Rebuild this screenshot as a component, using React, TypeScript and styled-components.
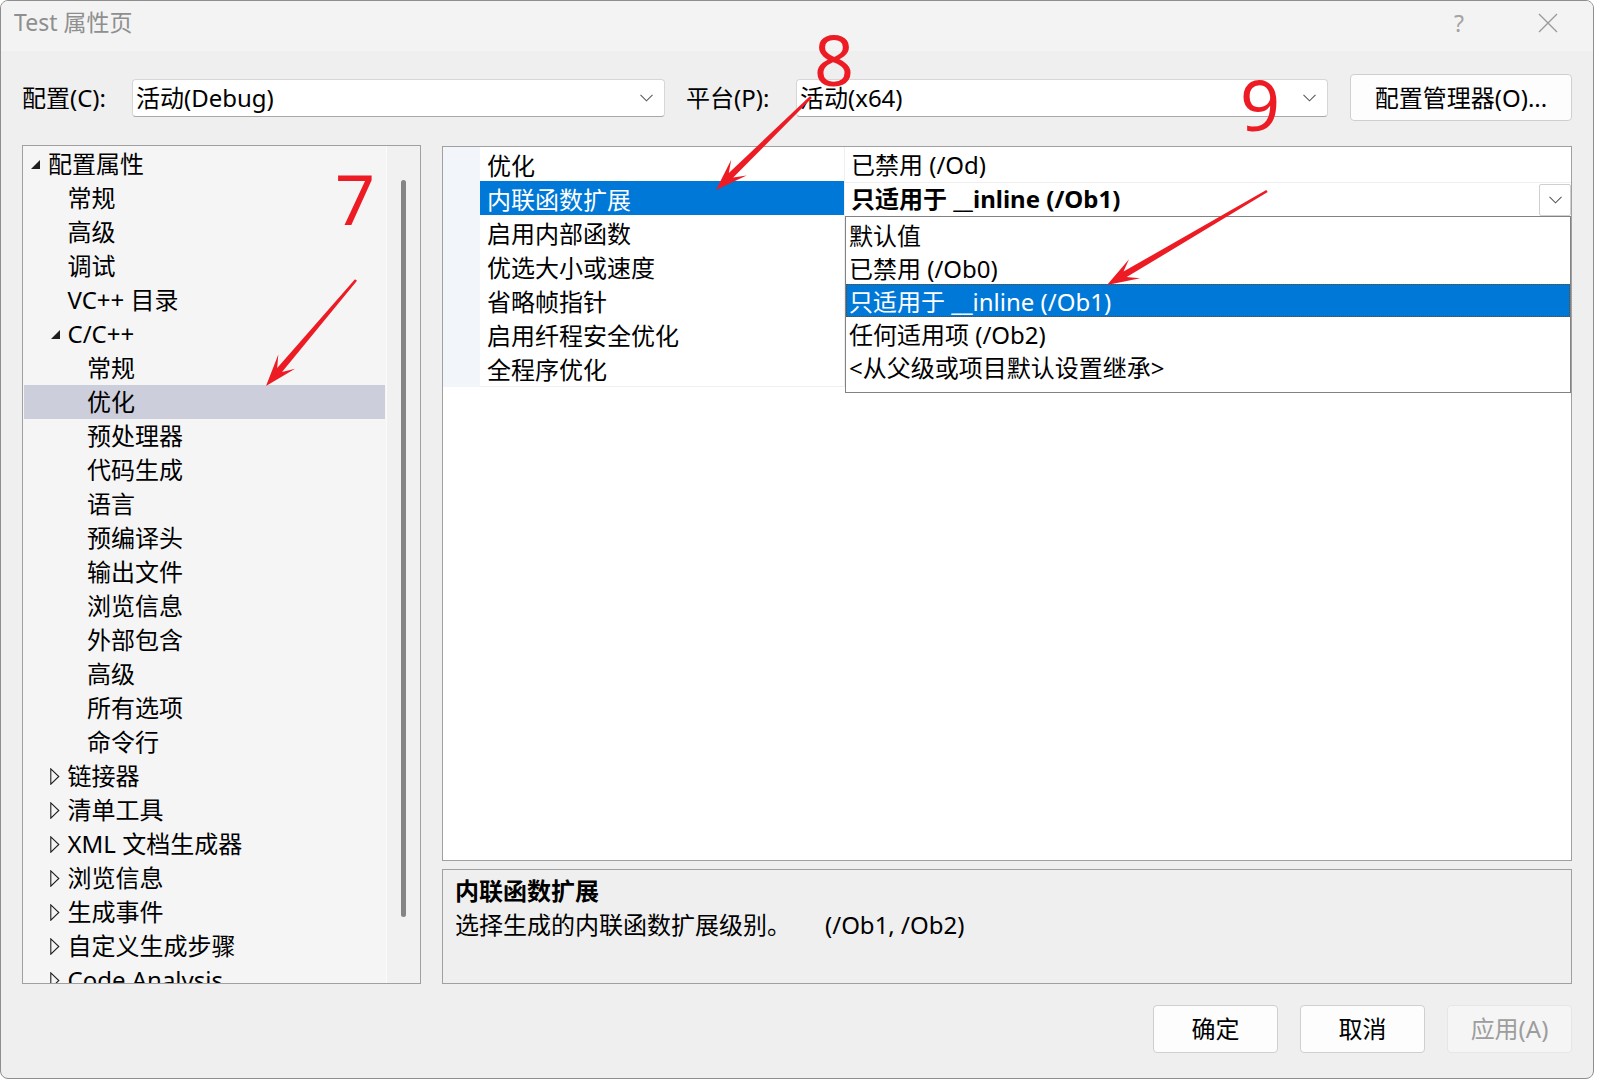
import React from 'react';
import styled, { createGlobalStyle } from 'styled-components';

const FONT = `"Noto Sans", "Noto Sans CJK SC", sans-serif`;

const Global = createGlobalStyle`
  html, body { margin: 0; padding: 0; background: #ffffff; }
  body { font-family: ${FONT}; }
  * { box-sizing: border-box; }
`;

const Window = styled.div`
  position: relative;
  width: 1594px;
  height: 1079px;
  border: 1px solid #8e8e8e;
  border-radius: 8px;
  overflow: hidden;
  background: #efefef;
  display: flex;
  flex-direction: column;
  font-family: ${FONT};
  font-size: 24px;
  color: #000;
`;

const TitleBar = styled.div`
  height: 50px;
  flex: none;
  background: #f3f3f3;
  display: flex;
  align-items: flex-start;
  padding: 4px 0 0 13px;
`;

const Title = styled.div`
  line-height: 34px;
  color: #8f8f8f;
  font-size: 23px;
`;

const Controls = styled.div`
  margin-left: auto;
  display: flex;
  align-items: center;
  height: 36px;
`;

const HelpBtn = styled.div`
  width: 46px;
  margin-right: 21px;
  text-align: center;
  color: #a3a3a3;
  font-size: 23px;
  line-height: 34px;
`;

const CloseBtn = styled.div`
  width: 90px;
  display: flex;
  align-items: center;
  justify-content: center;
`;

const Body = styled.div`
  flex: 1;
  display: flex;
  flex-direction: column;
  padding: 0 21px;
`;

const ConfigRow = styled.div`
  margin-top: 23px;
  height: 47px;
  display: flex;
  align-items: center;
`;

const Label = styled.div<{ $gap?: number }>`
  width: 110px;
  margin-left: ${(p) => p.$gap ?? 0}px;
  flex: none;
  line-height: 34px;
`;

const Combo = styled.div<{ $w: number }>`
  width: ${(p) => p.$w}px;
  height: 38px;
  flex: none;
  background: #ffffff;
  border: 1px solid #d6d6d6;
  border-bottom-color: #a8a8a8;
  border-radius: 4px;
  display: flex;
  align-items: center;
  padding: 0 11px 0 3px;
`;

const ComboText = styled.div`
  flex: 1;
  line-height: 34px;
  white-space: nowrap;
`;

const PushButton = styled.div<{ $w: number; $disabled?: boolean }>`
  width: ${(p) => p.$w}px;
  height: 48px;
  flex: none;
  display: flex;
  align-items: center;
  justify-content: center;
  background: ${(p) => (p.$disabled ? '#f5f5f5' : '#fdfdfd')};
  border: 1px solid ${(p) => (p.$disabled ? '#e6e6e6' : '#cfcfcf')};
  border-radius: 4px;
  color: ${(p) => (p.$disabled ? '#9d9d9d' : '#000')};
  line-height: 34px;
  white-space: nowrap;
`;

const ManagerButton = styled(PushButton)`
  margin-left: 22px;
  height: 47px;
`;

const Main = styled.div`
  margin-top: 24px;
  height: 839px;
  display: grid;
  grid-template-columns: 399px 1fr;
  column-gap: 21px;
`;

const TreePanel = styled.div`
  border: 1px solid #a0a0a0;
  background: #f5f5f5;
  display: flex;
  overflow: hidden;
`;

const TreeList = styled.div`
  flex: 1;
  padding-top: 1px;
  overflow: hidden;
`;

const TreeRow = styled.div<{ $depth: number; $selected?: boolean }>`
  height: 34px;
  margin: 0 1px;
  display: flex;
  align-items: center;
  padding-left: ${(p) => 6 + p.$depth * 19.5}px;
  background: ${(p) => (p.$selected ? '#cccedb' : 'transparent')};
  white-space: nowrap;
`;

const Toggle = styled.div`
  width: 18px;
  flex: none;
  display: flex;
  align-items: center;
`;

const RowText = styled.span`
  line-height: 34px;
`;

const ScrollTrack = styled.div`
  width: 34px;
  flex: none;
  border-left: 1px solid #fbfbfb;
  background: #f1f1f1;
  padding: 34px 0 0 14px;
`;

const ScrollThumb = styled.div`
  width: 5px;
  height: 737px;
  border-radius: 3px;
  background: #858585;
`;

const RightCol = styled.div`
  display: flex;
  flex-direction: column;
  gap: 8px;
`;

const GridPanel = styled.div`
  margin-top: 1px;
  height: 715px;
  border: 1px solid #a0a0a0;
  background: #ffffff;
`;

const GridRow = styled.div`
  display: grid;
  grid-template-columns: 37px 365px 1fr;
  height: 34px;
`;

const MarginCell = styled.div`
  background: #f2f5fa;
`;

const NameCell = styled.div<{ $selected?: boolean }>`
  display: flex;
  align-items: center;
  padding-left: 7px;
  border-bottom: 1px solid #efefef;
  border-right: 1px solid #efefef;
  background: ${(p) => (p.$selected ? '#0078d7' : '#ffffff')};
  color: ${(p) => (p.$selected ? '#ffffff' : '#000')};
  white-space: nowrap;
`;

const ValueCell = styled.div<{ $bold?: boolean }>`
  position: relative;
  display: flex;
  align-items: center;
  padding-left: 6px;
  border-bottom: 1px solid #efefef;
  font-weight: ${(p) => (p.$bold ? 700 : 400)};
  white-space: nowrap;
`;

const ValueText = styled.span`
  flex: 1;
  line-height: 33px;
`;

const DropButton = styled.div`
  width: 32px;
  height: 32px;
  flex: none;
  align-self: flex-end;
  background: #ffffff;
  border: 1px solid #cfcfcf;
  border-radius: 2px;
  display: flex;
  align-items: center;
  justify-content: center;
`;

const DropList = styled.div`
  position: absolute;
  top: 100%;
  left: 0;
  right: 0;
  z-index: 5;
  background: #ffffff;
  border: 1px solid #828282;
  padding: 1px 0 9px;
  font-weight: 400;
`;

const DropItem = styled.div<{ $selected?: boolean }>`
  height: 33px;
  display: flex;
  align-items: center;
  padding-left: 3px;
  background: ${(p) => (p.$selected ? '#0078d7' : 'transparent')};
  color: ${(p) => (p.$selected ? '#ffffff' : '#000')};
  outline: ${(p) => (p.$selected ? '1px dotted #6b4a1c' : 'none')};
  outline-offset: -1px;
`;

const DescPanel = styled.div`
  height: 115px;
  border: 1px solid #a0a0a0;
  background: #efefef;
  padding: 4px 12px;
`;

const DescTitle = styled.div`
  font-weight: 700;
  line-height: 34px;
`;

const DescText = styled.div`
  line-height: 34px;
  white-space: nowrap;
`;

const DescFlags = styled.span`
  margin-left: 34px;
`;

const Footer = styled.div`
  margin-top: 21px;
  display: flex;
  justify-content: flex-end;
  gap: 22px;
`;

const Overlay = styled.svg`
  position: absolute;
  left: -1px;
  top: -1px;
  pointer-events: none;
  z-index: 10;
`;

const Digit = styled.span<{ $x: number; $y: number }>`
  position: absolute;
  left: ${(p) => p.$x}px;
  top: ${(p) => p.$y}px;
  z-index: 11;
  font-family: "Noto Sans", sans-serif;
  font-size: 70px;
  line-height: 1;
  color: #ed1c24;
`;

const Chevron = () => (
  <svg width="13" height="8" viewBox="0 0 13 8">
    <polyline points="0.5,0.8 6.5,6.8 12.5,0.8" fill="none" stroke="#5a5a5a" strokeWidth="1.1" />
  </svg>
);

const Expanded = () => (
  <svg width="11" height="11" viewBox="0 0 11 11">
    <polygon points="10,1 10,10 1,10" fill="#1e1e1e" />
  </svg>
);

const Collapsed = () => (
  <svg width="10" height="17" viewBox="0 0 10 17">
    <polygon points="0.8,0.8 8.8,8.5 0.8,16.2" fill="none" stroke="#1e1e1e" strokeWidth="1.1" />
  </svg>
);

const CloseIcon = () => (
  <svg width="20" height="20" viewBox="0 0 20 20">
    <path d="M1 1 L19 19 M19 1 L1 19" stroke="#9a9a9a" strokeWidth="1.3" fill="none" />
  </svg>
);

function arrowPoints(sx: number, sy: number, tx: number, ty: number) {
  const dx = tx - sx;
  const dy = ty - sy;
  const len = Math.hypot(dx, dy);
  const ux = dx / len;
  const uy = dy / len;
  const nx = -uy;
  const ny = ux;
  const L = 30;
  const W = 11;
  const neck = 3.2;
  const tail = 1.3;
  const p = (a: number, b: number) =>
    `${(tx - ux * a + nx * b).toFixed(1)},${(ty - uy * a + ny * b).toFixed(1)}`;
  return [
    `${(sx + nx * tail).toFixed(1)},${(sy + ny * tail).toFixed(1)}`,
    p(L - 9, neck),
    p(L + 2, W),
    `${tx},${ty}`,
    p(L + 2, -W),
    p(L - 9, -neck),
    `${(sx - nx * tail).toFixed(1)},${(sy - ny * tail).toFixed(1)}`,
  ].join(' ');
}

type TreeItem = { label: string; depth: number; toggle?: 'open' | 'closed'; selected?: boolean };

const tree: TreeItem[] = [
  { label: '配置属性', depth: 0, toggle: 'open' },
  { label: '常规', depth: 1 },
  { label: '高级', depth: 1 },
  { label: '调试', depth: 1 },
  { label: 'VC++ 目录', depth: 1 },
  { label: 'C/C++', depth: 1, toggle: 'open' },
  { label: '常规', depth: 2 },
  { label: '优化', depth: 2, selected: true },
  { label: '预处理器', depth: 2 },
  { label: '代码生成', depth: 2 },
  { label: '语言', depth: 2 },
  { label: '预编译头', depth: 2 },
  { label: '输出文件', depth: 2 },
  { label: '浏览信息', depth: 2 },
  { label: '外部包含', depth: 2 },
  { label: '高级', depth: 2 },
  { label: '所有选项', depth: 2 },
  { label: '命令行', depth: 2 },
  { label: '链接器', depth: 1, toggle: 'closed' },
  { label: '清单工具', depth: 1, toggle: 'closed' },
  { label: 'XML 文档生成器', depth: 1, toggle: 'closed' },
  { label: '浏览信息', depth: 1, toggle: 'closed' },
  { label: '生成事件', depth: 1, toggle: 'closed' },
  { label: '自定义生成步骤', depth: 1, toggle: 'closed' },
  { label: 'Code Analysis', depth: 1, toggle: 'closed' },
];

const props: { name: string; value: string }[] = [
  { name: '优化', value: '已禁用 (/Od)' },
  { name: '内联函数扩展', value: '只适用于 __inline (/Ob1)' },
  { name: '启用内部函数', value: '' },
  { name: '优选大小或速度', value: '' },
  { name: '省略帧指针', value: '' },
  { name: '启用纤程安全优化', value: '' },
  { name: '全程序优化', value: '' },
];

const options = ['默认值', '已禁用 (/Ob0)', '只适用于 __inline (/Ob1)', '任何适用项 (/Ob2)', '<从父级或项目默认设置继承>'];

export default function App() {
  return (
    <>
      <Global />
      <Window>
        <TitleBar>
          <Title>Test 属性页</Title>
          <Controls>
            <HelpBtn>?</HelpBtn>
            <CloseBtn>
              <CloseIcon />
            </CloseBtn>
          </Controls>
        </TitleBar>
        <Body>
          <ConfigRow>
            <Label>配置(C):</Label>
            <Combo $w={533}>
              <ComboText>活动(Debug)</ComboText>
              <Chevron />
            </Combo>
            <Label $gap={21}>平台(P):</Label>
            <Combo $w={532}>
              <ComboText>活动(x64)</ComboText>
              <Chevron />
            </Combo>
            <ManagerButton $w={222}>配置管理器(O)...</ManagerButton>
          </ConfigRow>
          <Main>
            <TreePanel>
              <TreeList>
                {tree.map((t, i) => (
                  <TreeRow key={i} $depth={t.depth} $selected={t.selected}>
                    <Toggle>
                      {t.toggle === 'open' && <Expanded />}
                      {t.toggle === 'closed' && <Collapsed />}
                    </Toggle>
                    <RowText>{t.label}</RowText>
                  </TreeRow>
                ))}
              </TreeList>
              <ScrollTrack>
                <ScrollThumb />
              </ScrollTrack>
            </TreePanel>
            <RightCol>
              <GridPanel>
                {props.map((p, i) => (
                  <GridRow key={i}>
                    <MarginCell />
                    <NameCell $selected={i === 1}>{p.name}</NameCell>
                    <ValueCell $bold={i === 1}>
                      <ValueText>{p.value}</ValueText>
                      {i === 1 && (
                        <>
                          <DropButton>
                            <Chevron />
                          </DropButton>
                          <DropList>
                            {options.map((o, j) => (
                              <DropItem key={j} $selected={j === 2}>
                                {o}
                              </DropItem>
                            ))}
                          </DropList>
                        </>
                      )}
                    </ValueCell>
                  </GridRow>
                ))}
              </GridPanel>
              <DescPanel>
                <DescTitle>内联函数扩展</DescTitle>
                <DescText>
                  选择生成的内联函数扩展级别。<DescFlags>(/Ob1, /Ob2)</DescFlags>
                </DescText>
              </DescPanel>
            </RightCol>
          </Main>
          <Footer>
            <PushButton $w={125}>确定</PushButton>
            <PushButton $w={125}>取消</PushButton>
            <PushButton $w={125} $disabled>
              应用(A)
            </PushButton>
          </Footer>
        </Body>
        <Overlay width="1598" height="1080" viewBox="0 0 1598 1080">
          <polygon points={arrowPoints(811, 97, 716, 190)} fill="#ed1c24" />
          <polygon points={arrowPoints(1267, 191, 1107, 285)} fill="#ed1c24" />
          <polygon points={arrowPoints(356, 280, 266, 386)} fill="#ed1c24" />
        </Overlay>
        <Digit $x={813} $y={23}>8</Digit>
        <Digit $x={1239} $y={68}>9</Digit>
        <Digit $x={334} $y={162}>7</Digit>
      </Window>
    </>
  );
}
